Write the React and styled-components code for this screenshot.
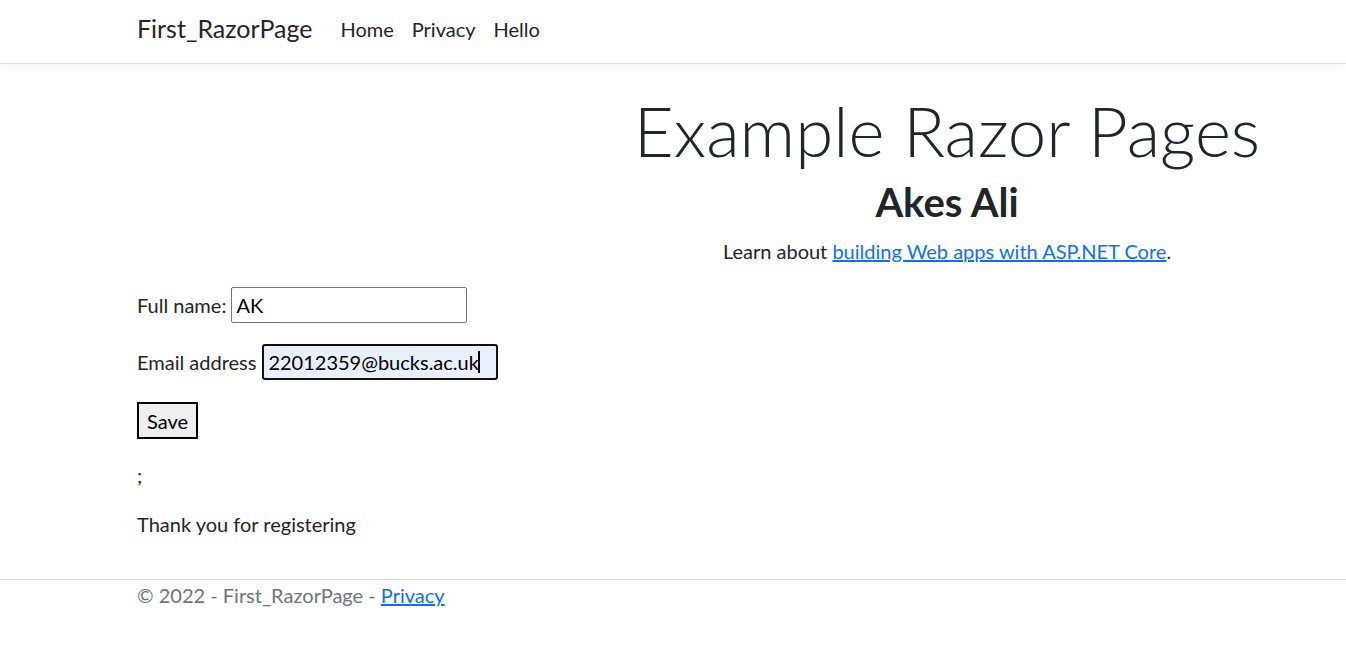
import React, { useEffect, useState } from 'react'
import styled, { createGlobalStyle } from 'styled-components'

const GlobalStyle = createGlobalStyle`
  body {
    margin: 0;
    font-family: Lato, "Open Sans", sans-serif;
    font-size: 20px;
    line-height: 1.5;
    color: #212529;
    background: #fff;
  }
  a {
    color: #0d6efd;
    text-decoration: underline;
  }
`

const Navbar = styled.header`
  height: 64px;
  box-sizing: border-box;
  padding: 0 137px 6px;
  border-bottom: 1px solid #e5e5e5;
  box-shadow: 0 4px 12px rgba(0, 0, 0, 0.04);
  display: flex;
  align-items: center;
`

const Brand = styled.a`
  font-size: 25px;
  color: #212529;
  text-decoration: none;
  margin-right: 19px;
`

const NavLinks = styled.nav`
  display: flex;
`

const NavLink = styled.a`
  padding: 0 9px;
  color: #212529;
  text-decoration: none;
`

const Main = styled.main`
  padding: 26px 137px 40px;
  display: flex;
  flex-direction: column;
`

const Hero = styled.section`
  display: grid;
  grid-template-columns: 548px minmax(0, 1fr);
`

const HeroText = styled.div`
  grid-column: 2;
  display: flex;
  flex-direction: column;
  align-items: center;
  text-align: center;
`

const Display = styled.h1`
  margin: 0 0 7px;
  font-size: 69px;
  font-weight: 300;
  line-height: 81px;
  white-space: nowrap;
`

const Name = styled.h2`
  margin: 0 0 10px;
  font-size: 40px;
  font-weight: 700;
  line-height: 1.2;
`

const Lead = styled.p`
  margin: 0;
`

const Form = styled.form`
  margin-top: 21px;
  display: flex;
  flex-direction: column;
  align-items: flex-start;
  gap: 21px;
`

const Field = styled.label`
  display: flex;
  align-items: center;
  gap: 5px;
`

const InputWrap = styled.span`
  position: relative;
  display: inline-flex;
  margin-left: 1px;
`

const Input = styled.input`
  width: 236px;
  height: 36px;
  box-sizing: border-box;
  padding: 0 4px;
  font: inherit;
  font-size: 20px;
  color: #000;
  border: ${p => (p.$focused ? '2px solid #101010' : '1px solid #767676')};
  border-radius: ${p => (p.$focused ? '3px' : '2px')};
  background: ${p => (p.$focused ? '#e8f0fe' : '#fff')};
  outline: none;
`

const Caret = styled.span`
  position: absolute;
  top: 7px;
  width: 2px;
  height: 22px;
  background: #000;
`

const SaveButton = styled.button`
  margin-top: 1px;
  height: 37px;
  padding: 0 8px;
  font: inherit;
  font-size: 20px;
  color: #000;
  background: #efefef;
  border: 2px solid #000;
  border-radius: 0;
`

const Para = styled.p`
  margin: ${p => (p.$tight ? '19px' : '21px')} 0 0;
`

const Footer = styled.footer`
  border-top: 1px solid #dee2e6;
  padding: 0 137px;
  color: #6c757d;
  line-height: 30px;
`

const email = '22012359@bucks.ac.uk'

function useTextWidth(text) {
  const [w, setW] = useState(205)
  useEffect(() => {
    const c = document.createElement('canvas').getContext('2d')
    c.font = '20px Lato'
    setW(c.measureText(text).width)
  }, [text])
  return w
}

export default function App() {
  const caretLeft = 5 + useTextWidth(email)
  return (
    <>
      <GlobalStyle />
      <Navbar>
        <Brand href="#">First_RazorPage</Brand>
        <NavLinks>
          <NavLink href="#">Home</NavLink>
          <NavLink href="#">Privacy</NavLink>
          <NavLink href="#">Hello</NavLink>
        </NavLinks>
      </Navbar>
      <Main>
        <Hero>
          <HeroText>
            <Display>Example Razor Pages</Display>
            <Name>Akes Ali</Name>
            <Lead>
              Learn about <a href="#">building Web apps with ASP.NET Core</a>.
            </Lead>
          </HeroText>
        </Hero>
        <Form onSubmit={e => e.preventDefault()}>
          <Field>
            Full name:
            <Input defaultValue="AK" readOnly />
          </Field>
          <Field>
            Email address
            <InputWrap>
              <Input $focused defaultValue={email} readOnly />
              <Caret style={{ left: caretLeft }} />
            </InputWrap>
          </Field>
          <SaveButton type="submit">Save</SaveButton>
        </Form>
        <Para>;</Para>
        <Para $tight>Thank you for registering</Para>
      </Main>
      <Footer>
        © 2022 - First_RazorPage - <a href="#">Privacy</a>
      </Footer>
    </>
  )
}
